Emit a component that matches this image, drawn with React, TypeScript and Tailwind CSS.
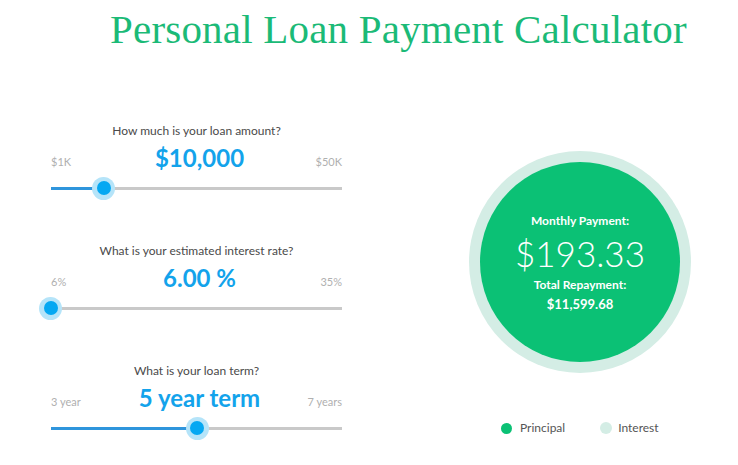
const sliders = [
  { q: 'How much is your loan amount?', value: '$10,000', min: '$1K', max: '$50K', pct: 9 / 49 },
  { q: 'What is your estimated interest rate?', value: '6.00 %', min: '6%', max: '35%', pct: 0 },
  { q: 'What is your loan term?', value: '5 year term', min: '3 year', max: '7 years', pct: 0.505 },
];

function Slider({ pct }: { pct: number }) {
  return (
    <div className="relative h-[24px] mt-[4px]">
      <div className="absolute left-0 right-0 top-[10.5px] h-[3px] bg-[#c9c9c9]" />
      <div className="absolute left-0 top-[10.5px] h-[3px] bg-[#2f95dc]" style={{ width: `${pct * 100}%` }} />
      <div
        className="absolute top-[0.5px] w-[23px] h-[23px] -ml-[12px] rounded-full bg-[#b5e4f9] flex items-center justify-center"
        style={{ left: `${pct * 100}%` }}
      >
        <div className="w-[14px] h-[14px] rounded-full bg-[#05a8f2]" />
      </div>
    </div>
  );
}

export default function App() {
  return (
    <div className="w-[738px] h-[465px] bg-white overflow-hidden font-['Lato',sans-serif]">
      <h1 className="pt-[5px] pl-[110px] text-[41px] tracking-[0.2px] leading-[48px] text-[#1bba77] font-['Liberation_Serif',serif] font-normal whitespace-nowrap">
        Personal Loan Payment Calculator
      </h1>

      <div className="flex mt-[70px]">
        <div className="ml-[51px] w-[291px] flex flex-col gap-[43px]">
          {sliders.map((s) => (
            <div key={s.q}>
              <div className="h-[16px] leading-[16px] text-[12px] text-[#4a4a4a] text-center">{s.q}</div>
              <div className="mt-[5px] h-[28px] flex items-end justify-between">
                <span className="w-[60px] pb-[3px] text-[11px] leading-[14px] text-[#b0b0b0]">{s.min}</span>
                <span className="text-[24px] leading-[28px] font-bold text-[#13a3eb] translate-x-[3px]">{s.value}</span>
                <span className="w-[60px] pb-[3px] text-[11px] leading-[14px] text-[#b0b0b0] text-right">{s.max}</span>
              </div>
              <Slider pct={s.pct} />
            </div>
          ))}
        </div>

        <div className="ml-[127px] mt-[28px] flex flex-col">
          <div className="w-[222px] h-[222px] rounded-full bg-[#d4ede5] flex items-center justify-center">
            <div className="w-[200px] h-[200px] rounded-full bg-[#0bc175] flex flex-col items-center justify-center text-white">
              <div className="text-[12px] leading-[16px] font-bold mt-[4px]">Monthly Payment:</div>
              <div className="text-[35px] leading-[48px] font-light">$193.33</div>
              <div className="text-[12px] leading-[16px] font-bold">Total Repayment:</div>
              <div className="text-[13px] leading-[22px] font-bold">$11,599.68</div>
            </div>
          </div>
          <div className="mt-[49px] flex items-center text-[12px] leading-[12px] text-[#555]">
            <span className="ml-[32px] w-[11px] h-[11px] rounded-full bg-[#0bc175]" />
            <span className="ml-[8px]">Principal</span>
            <span className="ml-[35px] w-[12px] h-[12px] rounded-full bg-[#d4ede5]" />
            <span className="ml-[6px]">Interest</span>
          </div>
        </div>
      </div>
    </div>
  );
}
